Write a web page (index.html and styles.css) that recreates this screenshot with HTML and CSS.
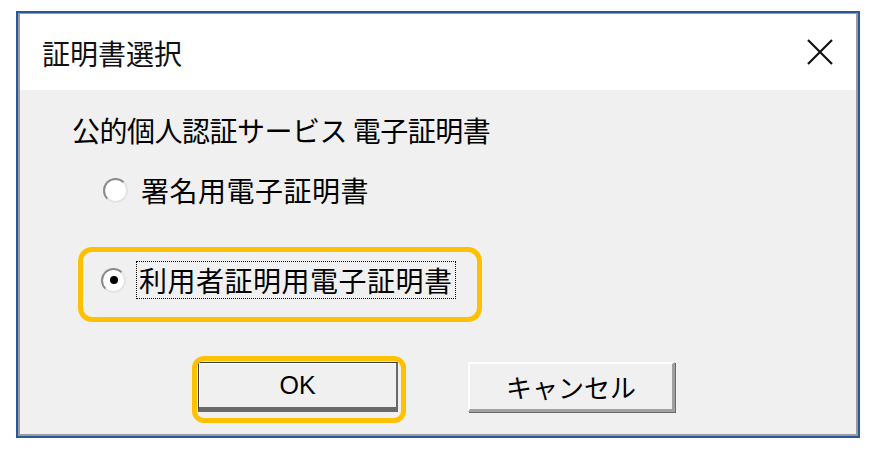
FILE: index.html
```html
<!DOCTYPE html>
<html lang="ja">
<head>
<meta charset="utf-8">
<link rel="stylesheet" href="styles.css">
</head>
<body>
<div class="window">
  <div class="inner">
    <div class="titlebar">
      <span class="title">証明書選択</span>
      <svg class="close" width="26" height="26" viewBox="0 0 26 26"><path d="M1 1 L25 25 M25 1 L1 25" stroke="#111" stroke-width="2.2" fill="none"/></svg>
    </div>
    <div class="body">
      <div class="label">公的個人認証サービス 電子証明書</div>
      <div class="radio-row row1">
        <span class="radio"></span>
        <span class="rtext">署名用電子証明書</span>
      </div>
      <div class="radio-row row2">
        <span class="radio checked"><span class="dot"></span></span>
        <span class="rtext focus">利用者証明用電子証明書</span>
      </div>
      <div class="buttons">
        <div class="btn default">OK</div>
        <div class="btn">キャンセル</div>
      </div>
    </div>
  </div>
  <div class="hl hl-radio"></div>
  <div class="hl hl-ok"></div>
</div>
</body>
</html>
```

FILE: styles.css
```css
html, body {
  margin: 0;
  padding: 0;
  background: #ffffff;
}
body {
  font-family: "Noto Sans CJK JP", "Noto Sans", sans-serif;
  color: #000;
}
.window {
  position: relative;
  margin: 11px 0 0 16px;
  width: 844px;
  height: 427px;
  box-sizing: border-box;
  border: 2px solid #2b5797;
}
.inner {
  height: 100%;
  box-sizing: border-box;
  border: 2px solid #9a9a9a;
  border-top-width: 1px;
  background: #f0f0f0;
  display: flex;
  flex-direction: column;
}
.titlebar {
  height: 76px;
  background: #ffffff;
  display: flex;
  align-items: center;
  justify-content: space-between;
  padding: 0 23px 0 22px;
  flex-shrink: 0;
}
.title {
  font-size: 28px;
  line-height: 34px;
  margin-top: 2px;
  color: #111;
}
.close {
  display: block;
  margin-top: 0px;
}
.body {
  flex: 1;
  padding: 23px 0 0 52px;
  display: flex;
  flex-direction: column;
}
.label {
  font-size: 28px;
  line-height: 34px;
  letter-spacing: -0.5px;
}
.radio-row {
  display: flex;
  align-items: center;
  height: 34px;
  padding-left: 31px;
}
.row1 {
  margin-top: 26px;
}
.row2 {
  margin-top: 56px;
  padding-left: 29px;
}
.radio {
  width: 21px;
  height: 21px;
  border-radius: 50%;
  border: 2px solid #8a8a8a;
  border-right-color: #e4e4e4;
  border-bottom-color: #e4e4e4;
  background: #ffffff;
  display: flex;
  align-items: center;
  justify-content: center;
  flex-shrink: 0;
}
.dot {
  width: 8px;
  height: 8px;
  border-radius: 50%;
  background: #000;
}
.rtext {
  font-size: 28px;
  line-height: 34px;
  margin-left: 13px;
  letter-spacing: 0.5px;
}
.row2 .rtext {
  margin-left: 12px;
}
.focus {
  outline: 1px dotted #000;
  outline-offset: 1px;
  padding: 0 1px;
}
.buttons {
  display: flex;
  gap: 70px;
  margin-top: 65px;
  margin-left: 126px;
}
.btn {
  width: 200px;
  height: 50px;
  box-sizing: border-box;
  display: flex;
  align-items: center;
  justify-content: center;
  font-size: 26px;
  background: #f0f0f0;
  border-style: solid;
  border-width: 2px 3px 3px 2px;
  border-color: #ffffff #a0a0a0 #a0a0a0 #ffffff;
  box-shadow: 1px 1px 0 #6a6a6a;
}
.btn.default {
  border: 1px solid #3c3c3c;
  border-bottom: 5px solid #6a6a6a;
  border-right: 2px solid #6a6a6a;
  box-shadow: inset 1px 1px 0 #ffffff;
  font-family: "Liberation Sans", sans-serif;
  font-size: 25px;
}
.btn + .btn {
  width: 207px;
}
.hl {
  position: absolute;
  border: 5px solid #ffc000;
  box-sizing: border-box;
  border-radius: 14px;
}
.hl-radio {
  left: 60px;
  top: 234px;
  width: 404px;
  height: 75px;
}
.hl-ok {
  left: 174px;
  top: 343px;
  width: 214px;
  height: 67px;
  border-radius: 12px;
}
```
